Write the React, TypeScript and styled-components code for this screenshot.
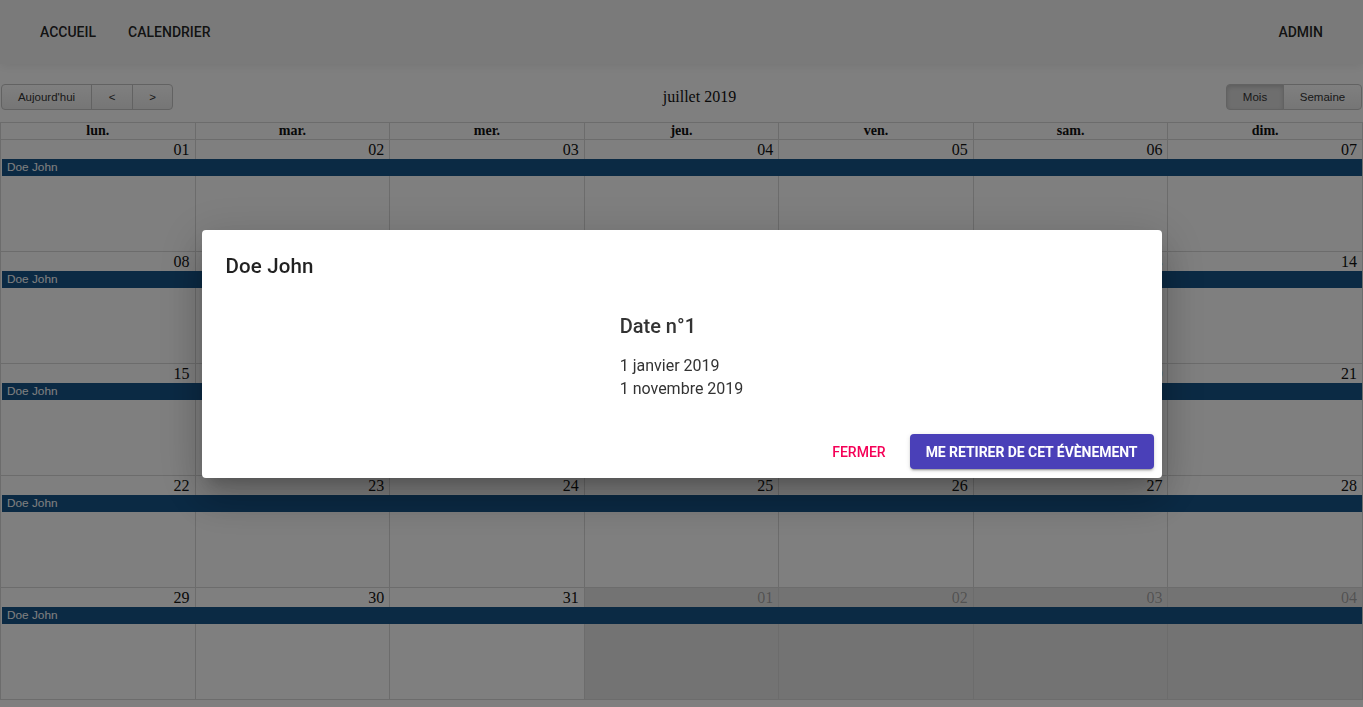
import React from "react";
import styled, { createGlobalStyle, css } from "styled-components";

const GlobalStyle = createGlobalStyle`
  html, body {
    margin: 0;
    padding: 0;
    background: #ffffff;
    overflow: hidden;
  }
  body {
    font-family: "Liberation Serif", "Times New Roman", serif;
  }
  * {
    box-sizing: border-box;
  }
`;

const Page = styled.div`
  min-height: 707px;
  background: #ffffff;
`;

const AppBar = styled.header`
  height: 64px;
  padding: 0 24px;
  display: flex;
  align-items: center;
  justify-content: space-between;
  background: #f5f5f5;
  box-shadow: 0 2px 10px 0 rgba(0, 0, 0, 0.08);
  position: relative;
  z-index: 1;
`;

const NavGroup = styled.nav`
  display: flex;
  align-items: center;
`;

const NavButton = styled.button`
  border: 0;
  background: transparent;
  padding: 6px 16px;
  font-family: Roboto, "Liberation Sans", sans-serif;
  font-size: 14px;
  font-weight: 500;
  letter-spacing: 0;
  line-height: 24px;
  text-transform: uppercase;
  color: rgba(0, 0, 0, 0.87);
  cursor: pointer;
`;

const CalendarSection = styled.section`
  padding-top: 20px;
`;

const Toolbar = styled.div`
  height: 26px;
  margin-bottom: 12px;
  display: flex;
  align-items: center;
`;

const ButtonGroup = styled.div<{ $right?: boolean }>`
  display: flex;
  padding: ${(p) => (p.$right ? "0 1px 0 0" : "0 0 0 1px")};
`;

const FcButton = styled.button<{ $active?: boolean; $w: number }>`
  width: ${(p) => p.$w}px;
  height: 26px;
  border: 1px solid #c4c4c4;
  margin-left: -1px;
  background: linear-gradient(#ffffff, #ececec);
  color: #333333;
  font-family: "Liberation Sans", Arial, sans-serif;
  font-size: 11.5px;
  padding: 0;
  cursor: pointer;
  &:first-child {
    margin-left: 0;
    border-radius: 4px 0 0 4px;
  }
  &:last-child {
    border-radius: 0 4px 4px 0;
  }
  ${(p) =>
    p.$active &&
    css`
      background: #dcdcdc;
      box-shadow: inset 0 2px 4px rgba(0, 0, 0, 0.15);
    `}
`;

const Title = styled.h2`
  flex: 1;
  margin: 0;
  text-align: center;
  font-size: 16px;
  font-weight: 400;
  color: #111111;
`;

const Grid = styled.div`
  border-top: 1px solid #d8d8d8;
  border-left: 1px solid #d8d8d8;
`;

const HeaderRow = styled.div`
  display: grid;
  grid-template-columns: repeat(7, 1fr);
`;

const HeaderCell = styled.div`
  border-right: 1px solid #d8d8d8;
  border-bottom: 1px solid #d8d8d8;
  text-align: center;
  font-size: 14px;
  font-weight: 700;
  line-height: 16px;
  color: #111111;
`;

const Week = styled.div`
  height: 112px;
  display: grid;
  grid-template-columns: repeat(7, 1fr);
  grid-template-rows: 19px 17px 1fr;
  border-bottom: 1px solid #d8d8d8;
`;

const DayBg = styled.div<{ $col: number; $other?: boolean }>`
  grid-column: ${(p) => p.$col};
  grid-row: 1 / -1;
  border-right: 1px solid #d8d8d8;
  background: ${(p) => (p.$other ? "#e6e6e6" : "transparent")};
`;

const DayNumber = styled.div<{ $col: number; $other?: boolean }>`
  grid-column: ${(p) => p.$col};
  grid-row: 1;
  text-align: right;
  padding: 0 6px 0 0;
  font-size: 16px;
  line-height: 19px;
  color: ${(p) => (p.$other ? "rgba(0, 0, 0, 0.3)" : "#111111")};
`;

const EventBar = styled.div`
  grid-column: 1 / -1;
  grid-row: 2;
  margin: 0 1px 0 1px;
  padding-left: 5px;
  background: #165489;
  color: #ffffff;
  font-family: "Liberation Sans", Arial, sans-serif;
  font-size: 11.8px;
  line-height: 17px;
`;

const Overlay = styled.div`
  position: fixed;
  inset: 0;
  z-index: 10;
  background: rgba(0, 0, 0, 0.5);
  display: flex;
  align-items: center;
  justify-content: center;
`;

const Dialog = styled.div`
  width: 960px;
  background: #ffffff;
  border-radius: 4px;
  display: flex;
  flex-direction: column;
  font-family: Roboto, "Liberation Sans", sans-serif;
  box-shadow: 0 11px 15px -7px rgba(0, 0, 0, 0.2), 0 24px 38px 3px rgba(0, 0, 0, 0.14),
    0 9px 46px 8px rgba(0, 0, 0, 0.12);
`;

const DialogTitle = styled.h2`
  margin: 0;
  padding: 20px 24px 0;
  font-size: 20.5px;
  font-weight: 500;
  line-height: 32px;
  letter-spacing: 0.15px;
  color: rgba(0, 0, 0, 0.87);
`;

const DialogContent = styled.div`
  padding: 28px 24px 26px;
  display: flex;
  justify-content: center;
`;

const DateBlock = styled.div`
  display: flex;
  flex-direction: column;
`;

const DateHeading = styled.h3`
  margin: 0 0 12px;
  font-size: 20px;
  font-weight: 500;
  line-height: 32px;
  color: #333333;
`;

const DateLine = styled.div`
  font-size: 16px;
  line-height: 23px;
  color: #333333;
`;

const DialogActions = styled.div`
  display: flex;
  justify-content: flex-end;
  align-items: center;
  gap: 8px;
  padding: 8px;
`;

const TextButton = styled.button`
  border: 0;
  background: transparent;
  height: 36px;
  padding: 6px 16px;
  font-family: Roboto, "Liberation Sans", sans-serif;
  font-size: 14px;
  font-weight: 500;
  letter-spacing: 0;
  text-transform: uppercase;
  color: #f50057;
  cursor: pointer;
`;

const ContainedButton = styled(TextButton)`
  height: 35px;
  border-radius: 4px;
  background: #4a40b8;
  color: #ffffff;
  font-weight: 700;
  letter-spacing: -0.05px;
  box-shadow: 0 3px 1px -2px rgba(0, 0, 0, 0.2), 0 2px 2px 0 rgba(0, 0, 0, 0.14),
    0 1px 5px 0 rgba(0, 0, 0, 0.12);
`;

const dayNames = ["lun.", "mar.", "mer.", "jeu.", "ven.", "sam.", "dim."];

const weeks: { day: number; other?: boolean }[][] = [
  [1, 2, 3, 4, 5, 6, 7].map((day) => ({ day })),
  [8, 9, 10, 11, 12, 13, 14].map((day) => ({ day })),
  [15, 16, 17, 18, 19, 20, 21].map((day) => ({ day })),
  [22, 23, 24, 25, 26, 27, 28].map((day) => ({ day })),
  [
    { day: 29 },
    { day: 30 },
    { day: 31 },
    { day: 1, other: true },
    { day: 2, other: true },
    { day: 3, other: true },
    { day: 4, other: true },
  ],
];

const pad = (n: number) => (n < 10 ? `0${n}` : `${n}`);

export default function App() {
  return (
    <Page>
      <GlobalStyle />
      <AppBar>
        <NavGroup>
          <NavButton>Accueil</NavButton>
          <NavButton>Calendrier</NavButton>
        </NavGroup>
        <NavGroup>
          <NavButton>Admin</NavButton>
        </NavGroup>
      </AppBar>

      <CalendarSection>
        <Toolbar>
          <ButtonGroup>
            <FcButton $w={91}>Aujourd'hui</FcButton>
            <FcButton $w={42}>&lt;</FcButton>
            <FcButton $w={41}>&gt;</FcButton>
          </ButtonGroup>
          <Title>juillet 2019</Title>
          <ButtonGroup $right>
            <FcButton $w={58} $active>
              Mois
            </FcButton>
            <FcButton $w={79}>Semaine</FcButton>
          </ButtonGroup>
        </Toolbar>

        <Grid>
          <HeaderRow>
            {dayNames.map((name) => (
              <HeaderCell key={name}>{name}</HeaderCell>
            ))}
          </HeaderRow>
          {weeks.map((week, i) => (
            <Week key={i}>
              {week.map((d, c) => (
                <DayBg key={`bg${c}`} $col={c + 1} $other={d.other} />
              ))}
              {week.map((d, c) => (
                <DayNumber key={`n${c}`} $col={c + 1} $other={d.other}>
                  {pad(d.day)}
                </DayNumber>
              ))}
              <EventBar>Doe John</EventBar>
            </Week>
          ))}
        </Grid>
      </CalendarSection>

      <Overlay>
        <Dialog>
          <DialogTitle>Doe John</DialogTitle>
          <DialogContent>
            <DateBlock>
              <DateHeading>Date n°1</DateHeading>
              <DateLine>1 janvier 2019</DateLine>
              <DateLine>1 novembre 2019</DateLine>
            </DateBlock>
          </DialogContent>
          <DialogActions>
            <TextButton>Fermer</TextButton>
            <ContainedButton>Me retirer de cet évènement</ContainedButton>
          </DialogActions>
        </Dialog>
      </Overlay>
    </Page>
  );
}
